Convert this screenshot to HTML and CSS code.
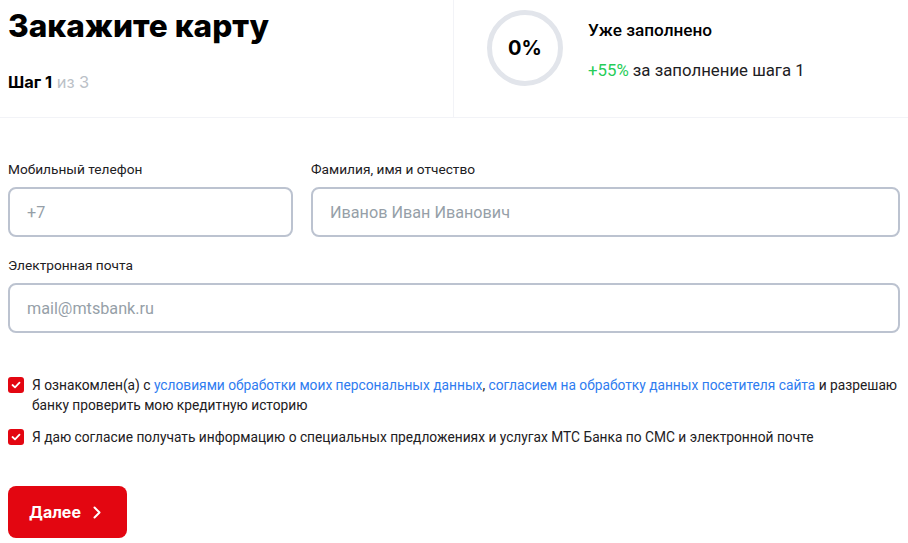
FILE: index.html
```html
<!DOCTYPE html>
<html lang="ru">
<head>
    <meta charset="UTF-8">
    <meta name="viewport" content="width=device-width, initial-scale=1.0">
    <title>Закажите карту</title>
    <link rel="stylesheet" href="styles.css">
</head>
<body>
    <div class="app">
        <div class="head">
            <div class="head-left">
                <h1 class="title">Закажите карту</h1>
                <div class="steps"><b>Шаг 1</b> <span>из 3</span></div>
            </div>
            <div class="head-right">
                <div class="progress">0%</div>
                <div class="progress-info">
                    <div class="progress-title">Уже заполнено</div>
                    <div class="progress-text"><span class="green">+55%</span> за заполнение шага 1</div>
                </div>
            </div>
        </div>

        <form class="form">
            <div class="row">
                <div class="field phone">
                    <label class="label">Мобильный телефон</label>
                    <input class="input" type="text" placeholder="+7">
                </div>
                <div class="field">
                    <label class="label">Фамилия, имя и отчество</label>
                    <input class="input" type="text" placeholder="Иванов Иван Иванович">
                </div>
            </div>
            <div class="row">
                <div class="field">
                    <label class="label">Электронная почта</label>
                    <input class="input" type="text" placeholder="mail@mtsbank.ru">
                </div>
            </div>

            <div class="checks">
                <div class="check">
                    <span class="box"><svg width="10" height="8" viewBox="0 0 10 8"><path d="M1.5 4l2.5 2.3L8.5 1.7" fill="none" stroke="#fff" stroke-width="1.8" stroke-linecap="round" stroke-linejoin="round"/></svg></span>
                    <p>Я ознакомлен(а) с <a href="#">условиями обработки моих персональных данных</a>, <a href="#">согласием на обработку данных посетителя сайта</a> и разрешаю банку проверить мою кредитную историю</p>
                </div>
                <div class="check">
                    <span class="box"><svg width="10" height="8" viewBox="0 0 10 8"><path d="M1.5 4l2.5 2.3L8.5 1.7" fill="none" stroke="#fff" stroke-width="1.8" stroke-linecap="round" stroke-linejoin="round"/></svg></span>
                    <p>Я даю согласие получать информацию о специальных предложениях и услугах МТС Банка по СМС и электронной почте</p>
                </div>
            </div>

            <button class="btn" type="button">Далее
                <svg width="8" height="13" viewBox="0 0 8 13"><path d="M1.5 1.5l5 5-5 5" fill="none" stroke="#fff" stroke-width="2" stroke-linecap="round" stroke-linejoin="round"/></svg>
            </button>
        </form>
    </div>
</body>
</html>
```

FILE: styles.css
```css
*{
    padding: 0;
    margin: 0;
    box-sizing: border-box;
}

body {
    font-family: Roboto, "Noto Sans", sans-serif;
    color: #1d2023;
    background: #fff;
}

.head {
    display: flex;
    height: 118px;
    border-bottom: 1px solid #f2f3f7;
}

.head-left {
    width: 454px;
    padding: 8px 8px 0;
    border-right: 1px solid #f2f3f7;
}

.title {
    font-family: Inter, Roboto, sans-serif;
    font-size: 31.6px;
    font-weight: 800;
    line-height: 36px;
    color: #000;
}

.steps {
    margin-top: 28px;
    font-family: Inter, Roboto, sans-serif;
    font-size: 16.4px;
    line-height: 20px;
}

.steps b {
    color: #000;
    font-weight: 700;
}

.steps span {
    color: #bbc1c7;
}

.head-right {
    display: flex;
    align-items: flex-start;
    padding: 10px 0 0 33px;
}

.progress {
    width: 76px;
    height: 76px;
    border: 5px solid #e2e5eb;
    border-radius: 50%;
    display: flex;
    align-items: center;
    justify-content: center;
    font-family: Inter, Roboto, sans-serif;
    font-size: 20px;
    font-weight: 700;
    color: #000;
}

.progress-info {
    margin-left: 25px;
    padding-top: 10px;
}

.progress-title {
    font-size: 17.2px;
    font-weight: 500;
    line-height: 20px;
    color: #000;
}

.progress-text {
    margin-top: 20px;
    font-size: 16.8px;
    line-height: 20px;
    color: #1d2023;
}

.green {
    color: #26cd58;
}

.form {
    padding: 42px 8px 0;
}

.row {
    display: flex;
    gap: 18px;
    margin-bottom: 19px;
}

.field {
    flex: 1;
    display: flex;
    flex-direction: column;
}

.field.phone {
    flex: 0 0 285px;
}

.label {
    font-size: 13.7px;
    line-height: 18px;
    margin-bottom: 9px;
    color: #1d2023;
}

.input {
    height: 50px;
    border: 2px solid #bcc3d0;
    border-radius: 8px;
    padding: 0 17px;
    font-family: Roboto, sans-serif;
    font-size: 16.2px;
    color: #1d2023;
    outline: none;
}

.input::placeholder {
    color: #969fa8;
}

.checks {
    margin-top: 42px;
}

.check {
    display: flex;
    align-items: flex-start;
    margin-bottom: 12px;
}

.box {
    flex: 0 0 16px;
    width: 16px;
    height: 16px;
    margin-top: 2px;
    border-radius: 3px;
    background: #e30611;
    display: flex;
    align-items: center;
    justify-content: center;
}

.check p {
    margin-left: 8px;
    font-size: 13.75px;
    line-height: 20px;
    color: #1d2023;
}

.check a {
    color: #2f7cf0;
    text-decoration: none;
}

.btn {
    margin-top: 39px;
    width: 119px;
    height: 52px;
    border: none;
    border-radius: 8px;
    background: #e30611;
    color: #fff;
    font-family: Inter, Roboto, sans-serif;
    font-size: 16px;
    font-weight: 700;
    display: flex;
    align-items: center;
    padding-left: 21px;
    gap: 12px;
    cursor: pointer;
}
```
